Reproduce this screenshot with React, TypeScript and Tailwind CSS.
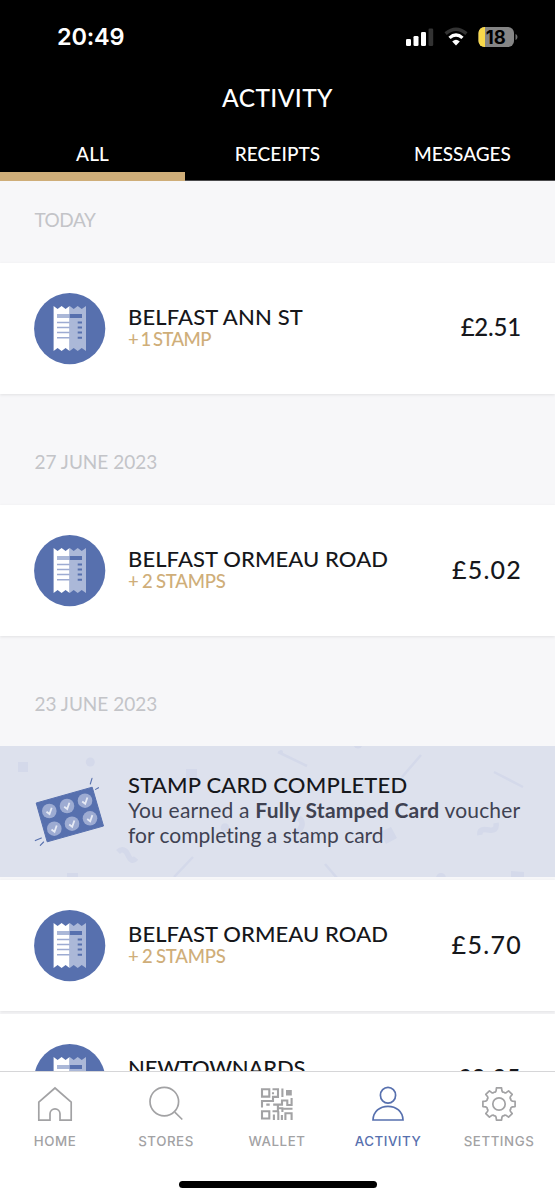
import React from "react";

const lato = "font-['Lato',sans-serif]";

function StatusBar() {
  return (
    <div className="flex h-[74px] items-center justify-between pl-[57px] pr-[37px]">
      <span className="font-['Inter',sans-serif] text-[23.5px] font-semibold leading-none tracking-[-0.2px]">20:49</span>
      <svg width="112" height="24" viewBox="0 0 112 24">
        <rect x="0" y="14" width="5" height="7" rx="1.3" fill="#fff" />
        <rect x="7.5" y="11" width="5" height="10" rx="1.3" fill="#fff" />
        <rect x="15" y="7" width="5" height="14" rx="1.3" fill="#fff" />
        <rect x="22.5" y="3.5" width="4.7" height="17.5" rx="1.3" fill="#333" />
        <path d="M39.6 8.6Q50 -.3 60.4 8.6" fill="none" stroke="#333" strokeWidth="3.4" />
        <path d="M43.5 12.9Q50 7 56.5 12.9" fill="none" stroke="#fff" strokeWidth="3.3" />
        <path d="M46.2 16.4Q50 13 53.8 16.4L50 20.6Z" fill="#fff" />
        <clipPath id="battery">
          <rect x="72.5" y="2" width="35.5" height="20" rx="6" />
        </clipPath>
        <g clipPath="url(#battery)">
          <rect x="72" y="2" width="36" height="20" fill="#858585" />
          <rect x="72" y="2" width="7" height="20" fill="#f8d84a" />
        </g>
        <path d="M109.5 9c2.6 1 2.6 5 0 6z" fill="#707070" />
        <text x="89.8" y="18.5" textAnchor="middle" fontFamily="Inter" fontSize="18.5" fontWeight="700" fill="#000">18</text>
      </svg>
    </div>
  );
}

function Tab({ label, active, cls }: { label: string; active?: boolean; cls: string }) {
  return (
    <div className="relative flex-1 text-center">
      <span className={`block text-[19px] font-medium leading-[24px] ${cls}`}>{label}</span>
      {active && <div className="absolute -bottom-px left-0 h-[9px] w-full bg-[#cfae79]" />}
    </div>
  );
}

function ReceiptIcon() {
  return (
    <svg width="72" height="72" viewBox="0 0 72 72" className="shrink-0">
      <circle cx="35.7" cy="35.7" r="35.6" fill="#5770ae" />
      <path d="M19.6 13l4 3 4-3 4 3 4-3v45l-4-3-4 3-4-3-4 3z" fill="#fff" />
      <path d="M35.7 13l4 3 4-3 4 3 4.3-3v45l-4.3-3-4 3-4-3-4 3z" fill="#abb8d8" />
      <path d="M23 21h12.7v4H23z" fill="#abb8d8" />
      <path d="M35.7 21H48v4H35.7z" fill="#5770ae" />
      <path d="M23 29.5h12.7M23 34.5h12.7M23 39.5h12.7M23 44.7h12.7" stroke="#9dabd2" strokeWidth="1.5" />
      <path d="M43.7 29.5H48M43.7 34.5H48M43.7 39.5H48M43.7 44.7H48" stroke="#5770ae" strokeWidth="2" />
    </svg>
  );
}

function DateHeading({ label, cls }: { label: string; cls: string }) {
  return (
    <div className={`flex shrink-0 items-start px-[34.5px] ${cls}`}>
      <span className="text-[19px] font-normal leading-[24px] text-[#c3c4c8]">{label}</span>
    </div>
  );
}

type RowProps = { name: string; stamps: string; price: string; nameCls: string; stampCls: string; priceCls: string };

function ReceiptRow({ name, stamps, price, nameCls, stampCls, priceCls }: RowProps) {
  return (
    <div className="flex h-[131px] shrink-0 items-center bg-white pl-[34px] pr-[34px] shadow-[0_1px_3px_rgba(0,0,0,0.09)]">
      <ReceiptIcon />
      <div className="ml-[22px] flex-1 whitespace-nowrap pb-[3px]">
        <div className={`text-[22px] font-medium leading-[24px] text-[#16171b] ${nameCls}`}>{name}</div>
        <div className={`text-[18.5px] font-medium leading-[21px] text-[#cfae79] ${stampCls}`}>{stamps}</div>
      </div>
      <span className={`pb-[3px] font-medium leading-[28px] text-[#16171b] ${priceCls}`}>{price}</span>
    </div>
  );
}

const stampCentres = [
  [24.3, 41],
  [42, 36],
  [60, 30.7],
  [29.3, 58.7],
  [47, 53.7],
  [65, 48.3],
];

function StampCardIcon() {
  return (
    <svg width="90" height="90" viewBox="0 0 90 90" className="shrink-0">
      <path d="M11.2 33L67.2 17.2 78.5 56 22.2 71.8z" fill="#5770ae" stroke="#5770ae" strokeWidth="1" strokeLinejoin="round" />
      {stampCentres.map(([x, y]) => (
        <g key={`${x}-${y}`} transform={`translate(${x} ${y})`}>
          <circle r="7.3" fill="#9dabd2" />
          <path d="M-2.8 .8L.2 3 2.4 -3.2" fill="none" stroke="#e6eaf5" strokeWidth="1.8" />
        </g>
      ))}
      <path d="M67 8.3L65.3 14M70.6 19.4L73.5 17.7M10.3 70.6L16.4 68M15.3 75.3L18.6 72" stroke="#5770ae" strokeWidth="1.1" strokeLinecap="round" />
    </svg>
  );
}

function Confetti() {
  return (
    <svg className="absolute inset-0" width="555" height="131" viewBox="0 0 555 131" fill="#d4d9ea">
      <path d="M18 16h10v10H18zM186 23h11v11h-11zM67 127h11v4H67zM511 125l13 1v6h-13zM380 86l11-5 6 11-11 6z" />
      <circle cx="90.3" cy="16" r="4.5" />
      <circle cx="225" cy="81.5" r="4.3" />
      <circle cx="358" cy="-2" r="4.5" />
      <circle cx="441" cy="132" r="5" />
      <circle cx="281" cy="6" r="2" />
      <path d="M174 131l19-20M278 6l29 14M421 9l-19 22M494 26l29 15M325 118l12 14" stroke="#d4d9ea" strokeWidth="2.5" fill="none" />
      <path
        d="M118 106C122 102 126 104 128 109S133 116 136 112M480 89C479 83 484 83 489 84S497 83 496 77M299 72C304 76 303 82 296 87"
        stroke="#d4d9ea"
        strokeWidth="5.5"
        fill="none"
      />
    </svg>
  );
}

function VoucherRow() {
  return (
    <div className="relative h-[131px] shrink-0 overflow-hidden bg-[#dde1ed]">
      <Confetti />
      <div className="relative flex pl-[25px] pt-[24px]">
        <StampCardIcon />
        <div className="ml-[13px] whitespace-nowrap pt-[3px]">
          <div className="text-[22px] font-medium leading-[24px] tracking-[0.2px] text-[#16171b]">STAMP CARD COMPLETED</div>
          <div className="text-[21px] leading-[25px] text-[#3f4252]">
            <div className="tracking-[0.2px]">
              You earned a <b className="font-bold">Fully Stamped Card</b> voucher
            </div>
            <div className="[font-variant-ligatures:none]">for completing a stamp card</div>
          </div>
        </div>
      </div>
    </div>
  );
}

const line = { fill: "none", stroke: "currentColor", strokeWidth: 1.7 };

const HomeIcon = () => (
  <svg width="36" height="36" viewBox="0 0 36 36" {...line}>
    <path d="M18 2L34.2 16.2V34.2H23V27.8a5 5 0 0 0-10 0V34.2H1.8V16.2Z" />
  </svg>
);

const SearchIcon = () => (
  <svg width="36" height="36" viewBox="0 0 36 36" {...line}>
    <circle cx="16.3" cy="15.6" r="14.3" />
    <path d="M26.8 26.2L34.3 33.5" />
  </svg>
);

const QrIcon = () => (
  <svg width="36" height="36" viewBox="0 0 36 36" {...line} strokeWidth="2.1">
    <path d="M3 3.3h7.3v7.3H3zM3 25.2h7.3v7.3H3z" />
    <path d="M13.5 3.3H19V10.9H14V15H3V21.5M14 6.2v2M7.3 18.6h3.4M14.2 18.6H23V14.5h5.3V19H32.6V12M18.9 18v7.2H13.5M23.4 2.5v8.4M18.9 22.2h4.5V26M24.5 22.8h9M14.9 28.5v5.4M19.3 25.2v8.7M26.4 33.9V27.2h6.2V33.9M22.9 29v4.9" />
    <path d="M27 4h5.8v5.5H27z" fill="currentColor" stroke="none" />
  </svg>
);

const PersonIcon = () => (
  <svg width="36" height="36" viewBox="0 0 36 36" {...line}>
    <ellipse cx="18" cy="9.2" rx="7.6" ry="7.9" />
    <path d="M3 34C3.3 25.5 9.8 20.3 18 20.3S32.7 25.5 33 34Z" />
  </svg>
);

function gearPath() {
  const p = (r: number, deg: number) => {
    const a = (deg * Math.PI) / 180;
    return `${(18 + r * Math.sin(a)).toFixed(2)} ${(18 - r * Math.cos(a)).toFixed(2)}`;
  };
  let d = "";
  for (let i = 0; i < 8; i++) {
    const c = i * 45;
    d += `${i ? "L" : "M"}${p(16.3, c - 9)}L${p(16.3, c + 9)}L${p(13.8, c + 12)}Q${p(11.9, c + 17)} ${p(12.8, c + 22.5)}Q${p(11.9, c + 28)} ${p(13.8, c + 33)}`;
  }
  return d + "Z";
}

const GearIcon = () => (
  <svg width="36" height="36" viewBox="0 0 36 36" {...line} strokeLinejoin="round">
    <path d={gearPath()} />
    <circle cx="18" cy="18" r="6.2" />
  </svg>
);

const navItems = [
  { label: "HOME", Icon: HomeIcon },
  { label: "STORES", Icon: SearchIcon },
  { label: "WALLET", Icon: QrIcon },
  { label: "ACTIVITY", Icon: PersonIcon, active: true },
  { label: "SETTINGS", Icon: GearIcon },
];

function BottomNav() {
  return (
    <nav className="flex h-[129px] shrink-0 flex-col border-t border-[#d6d6d8] bg-white">
      <div className="-ml-px flex pt-[14px]">
        {navItems.map(({ label, Icon, active }) => (
          <div key={label} className={`flex w-[111px] shrink-0 flex-col items-center ${active ? "text-[#5770ae]" : "text-[#a2a2a4]"}`}>
            <Icon />
            <span className="mt-[10px] pl-px font-['Inter',sans-serif] text-[13.3px] font-medium leading-[18px] tracking-[0.55px]">{label}</span>
          </div>
        ))}
      </div>
      <div className="mx-auto mt-[31px] h-[7px] w-[198px] rounded-full bg-black" />
    </nav>
  );
}

export default function App() {
  return (
    <div className={`flex h-[1200px] w-[555px] flex-col overflow-hidden bg-[#f7f7f9] ${lato}`}>
      <header className="h-[181px] shrink-0 border-b border-[#4b4b4d] bg-black text-white">
        <StatusBar />
        <h1 className="text-center text-[24.5px] font-medium leading-[48px] tracking-[0.4px]">ACTIVITY</h1>
        <div className="flex h-[58px] pt-[20px]">
          <Tab label="ALL" active cls="tracking-[0.1px]" />
          <Tab label="RECEIPTS" cls="tracking-[0.1px]" />
          <Tab label="MESSAGES" cls="" />
        </div>
      </header>
      <main className="flex min-h-0 flex-1 flex-col overflow-hidden">
        <DateHeading label="TODAY" cls="h-[82px] pt-[27px] tracking-[-0.5px]" />
        <ReceiptRow name="BELFAST ANN ST" stamps="+ 1 STAMP" price="£2.51" nameCls="tracking-[0.15px]" stampCls="tracking-[-0.6px] [word-spacing:-1.7px]" priceCls="text-[24px] tracking-[-0.2px]" />
        <DateHeading label="27 JUNE 2023" cls="h-[111px] pt-[56px]" />
        <ReceiptRow name="BELFAST ORMEAU ROAD" stamps="+ 2 STAMPS" price="£5.02" nameCls="tracking-[0.1px]" stampCls="tracking-[-0.2px] [word-spacing:-1px]" priceCls="-mr-[1px] text-[25px] tracking-[1.2px]" />
        <DateHeading label="23 JUNE 2023" cls="h-[110px] pt-[56px]" />
        <div className="flex shrink-0 flex-col gap-[3px]">
          <VoucherRow />
          <ReceiptRow name="BELFAST ORMEAU ROAD" stamps="+ 2 STAMPS" price="£5.70" nameCls="tracking-[0.1px]" stampCls="tracking-[-0.2px] [word-spacing:-1px]" priceCls="-mr-[1px] text-[25px] tracking-[1.3px]" />
          <ReceiptRow name="NEWTOWNARDS" stamps="+ 1 STAMP" price="£3.35" nameCls="tracking-[-0.2px]" stampCls="tracking-[-0.6px]" priceCls="text-[24px] tracking-[0.5px]" />
        </div>
      </main>
      <BottomNav />
    </div>
  );
}
